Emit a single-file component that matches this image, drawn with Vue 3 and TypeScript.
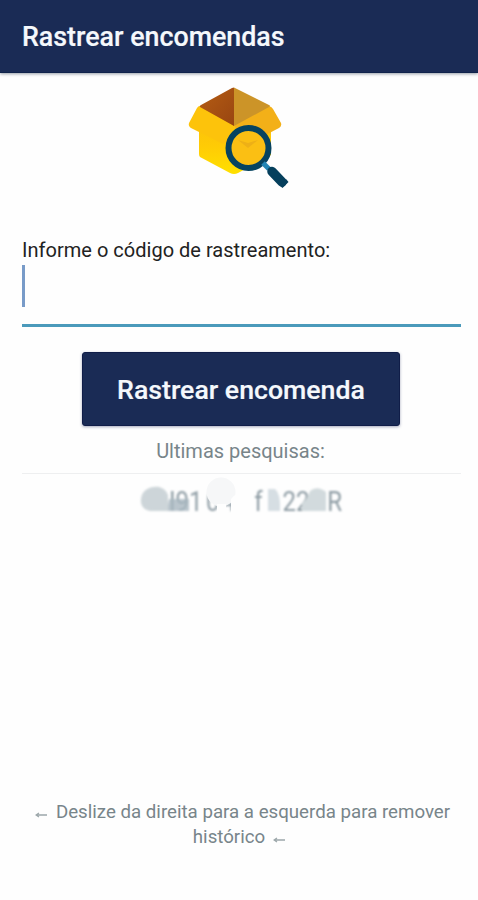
<script setup lang="ts">
import { ref } from 'vue'

const code = ref('')
</script>

<template>
  <div class="screen">
    <header class="bar"><h1>Rastrear encomendas</h1></header>
    <main class="content">
      <svg class="logo" viewBox="0 0 104 106" width="104" height="106" aria-hidden="true">
        <defs>
          <linearGradient id="front" x1="0" y1="0" x2="0" y2="1">
            <stop offset="0" stop-color="#fbc00d" />
            <stop offset=".5" stop-color="#ffcb05" />
            <stop offset="1" stop-color="#ffe000" />
          </linearGradient>
          <linearGradient id="brown" x1="0" y1="0" x2="1" y2="1">
            <stop offset="0" stop-color="#b65d13" />
            <stop offset="1" stop-color="#984511" />
          </linearGradient>
        </defs>
        <path d="M12 35 47 40 84 35V72L51 90Q47 92 43 90L13 74Q12 73 12 71Z" fill="url(#front)" />
        <path d="M13 23 47 42 41 57Q39 62 34 60L4 45Q1 43 2 40L10 25Q11 23 13 23Z" fill="#fdc30b" />
        <path d="M82 23 47 42 55 58Q58 62 63 60L92 45Q95 43 94 40L86 26Q85 24 82 23Z" fill="#f3b018" />
        <path d="M47 4.500V43L13 24Q12 23 14 22L45 5Z" fill="url(#brown)" />
        <path d="M47 4.500 82 22Q84 23 82 24L47 43Z" fill="#cc9428" />
        <circle cx="61.500" cy="65" r="19" fill="#fbbf13" />
        <path d="M51 57 61 60 71 57 61 65Z" fill="#eeb016" />
        <circle cx="61.500" cy="65" r="20" fill="none" stroke="#064360" stroke-width="6" />
        <path d="M76 80 82 86" stroke="#2285b5" stroke-width="5" />
        <path d="M85 88.500 95 99" stroke="#053f5c" stroke-width="9.500" stroke-linecap="round" />
        <path d="M92.500 102.500 99 96 101.500 99 95.500 105Z" fill="#053f5c" />
      </svg>
      <label class="field-label" for="code">Informe o código de rastreamento:</label>
      <div class="field">
        <span class="caret" />
        <input id="code" v-model="code" type="text" autocomplete="off" />
      </div>
      <button class="submit" type="button"><span>Rastrear encomenda</span></button>
      <p class="recent">Ultimas pesquisas:</p>
      <div class="history">
        <svg class="tracking" viewBox="0 0 240 46" width="240" height="46">
          <defs>
            <filter id="soft" x="-10%" y="-20%" width="120%" height="140%"><feGaussianBlur stdDeviation="1" /></filter>
          </defs>
          <g filter="url(#soft)">
            <g class="digits" transform="scale(.86 1)">
              <text x="57" y="37">I91</text>
              <text x="100" y="37">0</text>
              <text x="119" y="37">4</text>
              <text x="156" y="37">f</text>
              <text x="172" y="37">1</text>
              <text x="189" y="37">22</text>
              <text x="241" y="37">R</text>
            </g>
            <path d="M49 25H69V37H47Z" fill="#a9b8c1" opacity=".8" />
            <path d="M48 37H34C24 38 20 31 21 25C22 16 30 12 39 13Q46 15 48 21Z" fill="#cdd5d9" />
            <path d="M148 15H155Q161 20 160 37H148Z" fill="#d6dee3" />
            <path d="M182 37V29Q187 26 190 17Q197 11 206 18V37Z" fill="#d2dadd" />
          </g>
          <circle cx="101" cy="18" r="14.500" fill="#f6f7f8" />
          <path d="M97 30H106V40H97ZM111 25Q120 14 133 18V40H111Z" fill="#fefefe" />
        </svg>
      </div>
    </main>
    <footer class="hint">
      <p class="first"><svg class="arrow" viewBox="0 0 13 8" width="13" height="8"><path d="M1 4H12M4 2 1 4 4 6" /></svg><span>Deslize da direita para a esquerda para remover</span></p>
      <p><span>histórico</span><svg class="arrow" viewBox="0 0 13 8" width="13" height="8"><path d="M1 4H12M4 2 1 4 4 6" /></svg></p>
    </footer>
  </div>
</template>

<style>
body {
  margin: 0;
  background: #fefefe;
}
</style>

<style scoped>
.screen {
  width: 100%;
  height: 900px;
  display: flex;
  flex-direction: column;
  overflow: hidden;
  font-family: Roboto, "Liberation Sans", sans-serif;
  background: #fefefe;
}
.bar {
  flex: none;
  height: 73px;
  box-sizing: border-box;
  padding: 21px 22px 0;
  background: #1a2b55;
  border-bottom: 1px solid #10234b;
  box-shadow: 0 1px 3px rgba(20, 35, 60, .45);
}
h1 {
  margin: 0;
  font-size: 26.8px;
  line-height: 32px;
  font-weight: 500;
  -webkit-text-stroke: .2px #f5f8fc;
  color: #f5f8fc;
  white-space: nowrap;
}
.content {
  display: flex;
  flex-direction: column;
  padding: 10px 17px 0 22px;
}
.logo {
  align-self: center;
  margin-right: 6px;
}
.field-label {
  margin-top: 48px;
  font-size: 20px;
  line-height: 26px;
  letter-spacing: .02px;
  color: #222;
  white-space: nowrap;
}
.field {
  display: flex;
  height: 64px;
  box-sizing: border-box;
  border-bottom: 3px solid #4b9abb;
  padding-top: 2px;
}
.caret {
  width: 3px;
  height: 42px;
  background: #789bc8;
}
input {
  flex: 1;
  min-width: 0;
  height: 42px;
  padding: 0 4px;
  border: 0;
  outline: 0;
  background: transparent;
  font: 24px Roboto, sans-serif;
}
.submit {
  align-self: center;
  width: 318px;
  height: 74px;
  margin: 25px 1px 0 0;
  padding: 2px 0 0;
  border: 1px solid #101d48;
  border-radius: 3px;
  background: #1a2b55;
  box-shadow: 0 1px 3px rgba(30, 40, 90, .4);
  color: #f5f8fc;
  font: 500 26.7px/32px Roboto, sans-serif;
  -webkit-text-stroke: .2px #f5f8fc;
}
.recent {
  margin: 12px 2px 0 0;
  text-align: center;
  font-size: 20px;
  line-height: 26px;
  color: #78858a;
}
.history {
  margin-top: 9px;
  border-top: 1px solid #eeeff0;
  display: flex;
  justify-content: center;
}
.tracking {
  display: block;
  margin-right: 4px;
}
.digits {
  font-size: 28px;
  fill: #8e9ca4;
}
.hint {
  margin-top: auto;
  padding: 0 27px 50px 28px;
  font-size: 18.7px;
  line-height: 25px;
  color: #78858a;
}
.hint p {
  margin: 0;
  display: flex;
  align-items: center;
  justify-content: center;
  gap: 8px;
  white-space: nowrap;
}
.hint .first {
  padding-left: 6px;
}
.arrow {
  flex: none;
  margin-top: 5px;
  fill: none;
  stroke: #9ca7aa;
  stroke-width: 1.3;
}
</style>
